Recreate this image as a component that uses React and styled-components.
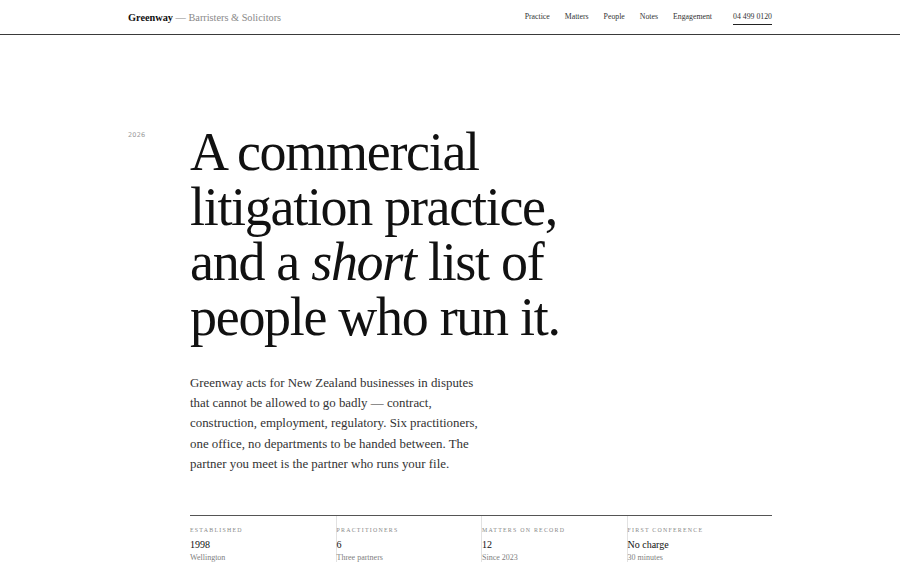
import React from "react";
import styled, { createGlobalStyle } from "styled-components";

const Global = createGlobalStyle`
  html, body { margin: 0; padding: 0; background: #fff; }
  body { font-family: "Liberation Serif", "Times New Roman", serif; color: #111; }
  * { box-sizing: border-box; }
`;

const Header = styled.header`
  height: 35px;
  border-bottom: 1px solid #3a3a3a;
`;

const Bar = styled.div`
  width: 644px;
  margin: 0 auto;
  height: 34px;
  display: flex;
  align-items: center;
  justify-content: space-between;
`;

const Brand = styled.div`
  font-size: 10.3px;
  color: #888;
  b { color: #111; font-weight: 700; }
`;

const Nav = styled.nav`
  display: flex;
  align-items: center;
  gap: 15px;
  font-size: 7.8px;
`;

const NavLink = styled.a`
  color: #333;
  text-decoration: none;
  padding: 3px 0;
  border-bottom: 1px solid ${(p) => (p.$underline ? "#222" : "transparent")};
  margin-left: ${(p) => (p.$underline ? "6px" : "0")};
`;

const Hero = styled.main`
  width: 644px;
  margin: 0 auto;
  padding-top: 90px;
  display: grid;
  grid-template-columns: 62px 1fr;
`;

const Year = styled.div`
  font-family: "DejaVu Sans", sans-serif;
  font-size: 6.5px;
  color: #999;
  padding-top: 6px;
  letter-spacing: 0.03em;
`;

const Body = styled.div`
  display: flex;
  flex-direction: column;
`;

const Title = styled.h1`
  margin: 0;
  font-weight: 400;
  font-size: 54px;
  line-height: 55px;
  letter-spacing: -0.024em;
  color: #111;
  em { font-style: italic; }
`;

const Lede = styled.p`
  margin: 28px 0 0;
  width: 295px;
  font-size: 12.9px;
  line-height: 20.2px;
  color: #333;
`;

const Stats = styled.div`
  margin-top: 41px;
  border-top: 1px solid #555;
  display: grid;
  grid-template-columns: repeat(4, 1fr);
`;

const Stat = styled.div`
  padding-top: 11px;
  border-left: ${(p) => (p.$first ? "none" : "1px solid #e2e2e2")};
  height: 60px;
`;

const Label = styled.div`
  font-size: 5.9px;
  letter-spacing: 0.21em;
  text-transform: uppercase;
  color: #888;
`;

const Value = styled.div`
  margin-top: 6px;
  font-size: 10px;
  color: #111;
`;

const Sub = styled.div`
  margin-top: 3px;
  font-size: 8px;
  color: #808080;
`;

const stats = [
  ["Established", "1998", "Wellington"],
  ["Practitioners", "6", "Three partners"],
  ["Matters on record", "12", "Since 2023"],
  ["First conference", "No charge", "30 minutes"],
];

export default function App() {
  return (
    <>
      <Global />
      <Header>
        <Bar>
          <Brand>
            <b>Greenway</b> — Barristers &amp; Solicitors
          </Brand>
          <Nav>
            <NavLink>Practice</NavLink>
            <NavLink>Matters</NavLink>
            <NavLink>People</NavLink>
            <NavLink>Notes</NavLink>
            <NavLink>Engagement</NavLink>
            <NavLink $underline>04 499 0120</NavLink>
          </Nav>
        </Bar>
      </Header>
      <Hero>
        <Year>2026</Year>
        <Body>
          <Title>
            A commercial
            <br />
            litigation practice,
            <br />
            and a <em>short</em> list of
            <br />
            people who run it.
          </Title>
          <Lede>
            Greenway acts for New Zealand businesses in disputes that cannot be
            allowed to go badly — contract, construction, employment,
            regulatory. Six practitioners, one office, no departments to be
            handed between. The partner you meet is the partner who runs your
            file.
          </Lede>
          <Stats>
            {stats.map(([l, v, s], i) => (
              <Stat key={l} $first={i === 0}>
                <Label>{l}</Label>
                <Value>{v}</Value>
                <Sub>{s}</Sub>
              </Stat>
            ))}
          </Stats>
        </Body>
      </Hero>
    </>
  );
}
